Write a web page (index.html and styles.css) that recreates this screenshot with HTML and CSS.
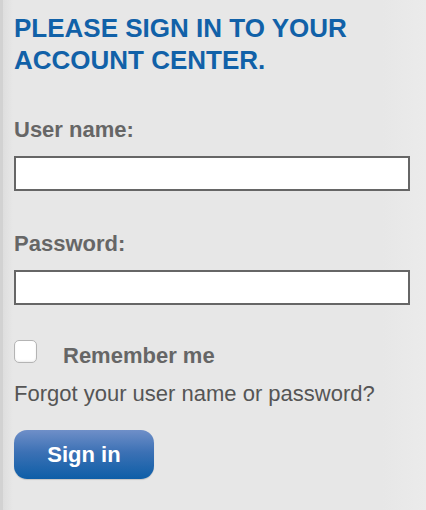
FILE: index.html
```html
<!DOCTYPE html>
<html lang="en">
<head>
  <meta charset="UTF-8">
  <title>Sign in</title>
  <link rel="stylesheet" href="styles.css">
</head>
<body>
  <!-- Sign in panel -->
  <div class="panel">
    <h1 class="title">PLEASE SIGN IN TO YOUR ACCOUNT CENTER.</h1>
    <form class="login-form">
      <label class="field-label" for="username">User name:</label>
      <input class="text-input" type="text" id="username" name="username">

      <label class="field-label second" for="password">Password:</label>
      <input class="text-input" type="password" id="password" name="password">

      <label class="remember">
        <span class="check-box"></span>
        <span class="remember-text">Remember me</span>
      </label>

      <a class="forgot" href="#">Forgot your user name or password?</a>

      <button type="submit" class="btn-signin">Sign in</button>
    </form>
  </div>
</body>
</html>
```

FILE: styles.css
```css
html, body {
  margin: 0;
  padding: 0;
  height: 100%;
}

body {
  font-family: "Liberation Sans", Arial, sans-serif;
  background: #e7e7e7;
}

/* Panel with a grey edge on the left */
.panel {
  min-height: 100%;
  box-sizing: border-box;
  padding: 12px 16px 20px 11px;
  border-left: 3px solid #d2d2d2;
  background: linear-gradient(to right, #dedede 0px, #e7e7e7 10px, #e7e7e7 380px, #ebebeb 100%);
}

.title {
  margin: 0;
  font-size: 26px;
  line-height: 32px;
  font-weight: bold;
  color: #1161a8;
}

.login-form {
  display: flex;
  flex-direction: column;
  align-items: flex-start;
  margin-top: 41px;
}

.field-label {
  font-size: 22px;
  font-weight: bold;
  color: #666;
  line-height: 26px;
}

.field-label.second {
  margin-top: 40px;
}

.text-input {
  box-sizing: border-box;
  width: 396px;
  height: 35px;
  margin-top: 13px;
  border: 2px solid #666;
  background: #fff;
  outline: none;
}

.remember {
  display: flex;
  align-items: flex-start;
  gap: 26px;
  margin-top: 35px;
}

.check-box {
  width: 21px;
  height: 21px;
  border: 1px solid #b4b4b4;
  border-radius: 5px;
  background: #fff;
  box-shadow: inset 0 -1px 2px rgba(0, 0, 0, 0.08);
}

.remember-text {
  margin-top: 3px;
  font-size: 22px;
  line-height: 26px;
  font-weight: bold;
  color: #666;
}

.forgot {
  margin-top: 12px;
  font-size: 22px;
  line-height: 26px;
  color: #555;
  text-decoration: none;
}

.btn-signin {
  margin-top: 23px;
  width: 140px;
  height: 49px;
  border: none;
  border-radius: 13px;
  background: linear-gradient(to bottom, #6f8fc8 0%, #3c71b5 45%, #0d5ea7 100%);
  color: #fff;
  font-family: "Liberation Sans", Arial, sans-serif;
  font-size: 22px;
  font-weight: bold;
  cursor: pointer;
  box-shadow: 0 1px 1px rgba(0, 0, 0, 0.15);
}
```
